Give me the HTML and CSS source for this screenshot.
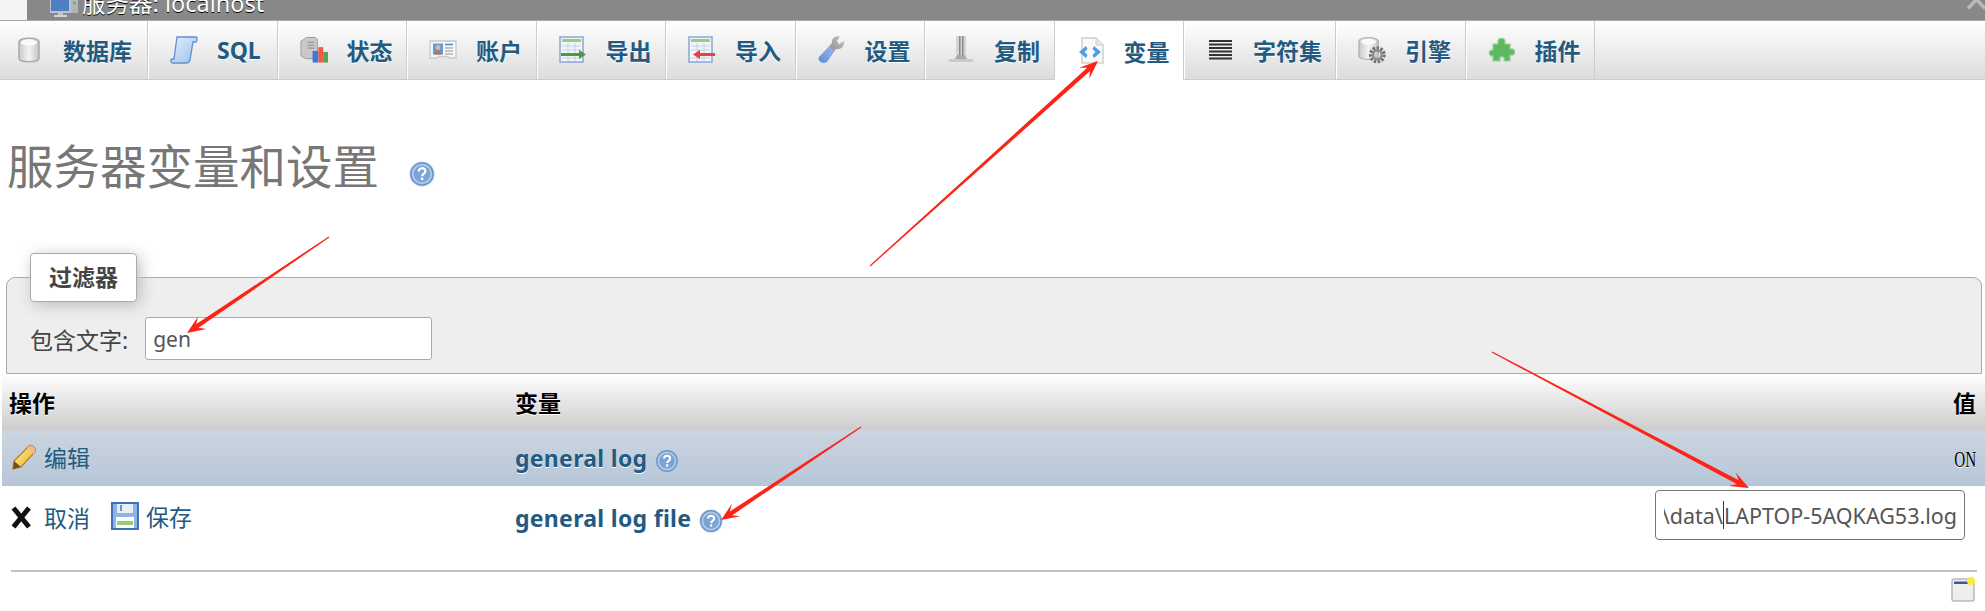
FILE: index.html
```html
<!DOCTYPE html>
<html lang="zh-CN">
<head>
    <meta charset="UTF-8">
    <title>服务器变量和设置</title>
    <link rel="stylesheet" href="styles.css">
</head>
<body>
    <svg class="defs" width="0" height="0">
        <defs>
            <linearGradient id="g-silver" x1="0" y1="0" x2="1" y2="0">
                <stop offset="0" stop-color="#c9c9c9"/><stop offset=".5" stop-color="#f4f4f4"/><stop offset="1" stop-color="#c4c4c4"/>
            </linearGradient>
            <linearGradient id="g-scroll" x1="0" y1="0" x2="1" y2="1">
                <stop offset="0" stop-color="#e4effb"/><stop offset="1" stop-color="#9cc0ea"/>
            </linearGradient>
            <linearGradient id="g-wrench" x1="1" y1="0" x2="0" y2="1">
                <stop offset="0" stop-color="#c9c9c9"/><stop offset=".45" stop-color="#9a9a9a"/><stop offset=".5" stop-color="#8fb0e4"/><stop offset="1" stop-color="#5f8bd6"/>
            </linearGradient>
            <linearGradient id="g-pencil" x1="0" y1="0" x2="1" y2="1">
                <stop offset="0" stop-color="#fff19a"/><stop offset="1" stop-color="#e8b020"/>
            </linearGradient>
            <symbol id="help" viewBox="0 0 26 26">
                <circle cx="13" cy="13" r="12.5" fill="#b4cbe6"/>
                <circle cx="13" cy="13" r="11" fill="none" stroke="#6d97cb" stroke-width="1.600"/>
                <circle cx="13" cy="13" r="8.4" fill="#7ba3d6"/>
                <path d="M9.8 10.4c0-4.200 6.600-4.200 6.600-.2 0 2.600-3.300 2.600-3.300 5" fill="none" stroke="#fff" stroke-width="2.200"/>
                <rect x="11.900" y="16.600" width="2.400" height="2.400" fill="#fff"/>
            </symbol>
        </defs>
    </svg>

    <header class="topbar">
        <span class="topbar-tab"></span>
        <svg class="topbar-icon" width="28" height="18" viewBox="0 0 28 18">
            <rect x="0" y="-4" width="20" height="16" fill="#4f7fc0" stroke="#b8c4d4" stroke-width="2"/>
            <rect x="8" y="12" width="5" height="3" fill="#c4c4c4"/>
            <rect x="4" y="15" width="13" height="2" fill="#d4d4d4"/>
            <rect x="21" y="-2" width="7" height="15" fill="#b4b4b4"/>
            <circle cx="24.500" cy="3" r="1.500" fill="#4fc04f"/>
        </svg>
        <span class="crumb">服务器: localhost</span>
        <svg class="collapse" width="19" height="12" viewBox="0 0 19 12">
            <path d="M1 10.500 9.500 1.500 18 10.500" fill="none" stroke="#b9b9b9" stroke-width="3.500"/>
        </svg>
    </header>

    <nav class="tabs">
        <a class="tab tab-first">
            <svg class="tab-icon" width="28" height="28" viewBox="0 0 28 28">
                <path d="M3 6c0-5 20-5 20 0v16c0 5-20 5-20 0z" fill="url(#g-silver)" stroke="#a9a9a9" stroke-width="1.500"/>
                <ellipse cx="13" cy="6.500" rx="8" ry="3" fill="#fafafa"/>
            </svg>
            <span>数据库</span>
        </a>
        <a class="tab">
            <svg class="tab-icon" width="28" height="28" viewBox="0 0 28 28">
                <path d="M7 1h19c1.500 0 1.500 5-.5 5h-2.500l-3 18c-.5 2-2 3-4 3H3c-2.500 0-3-3.500-.5-4H4z" fill="url(#g-scroll)" stroke="#5f90cf" stroke-width="1.300"/>
            </svg>
            <span>SQL</span>
        </a>
        <a class="tab">
            <svg class="tab-icon" width="29" height="28" viewBox="0 0 29 28">
                <path d="M1 5l6-4h9l2 2v20H6l-5-3z" fill="#c9c9c9" stroke="#9c9c9c"/>
                <path d="M8 6h7M8 9h7M8 12h7" stroke="#8a8a8a"/>
                <rect x="13" y="15" width="6" height="12" fill="#3d78d8"/>
                <rect x="19" y="11" width="5" height="16" fill="#ef5a4c"/>
                <rect x="24" y="16" width="5" height="11" fill="#52a84e"/>
            </svg>
            <span>状态</span>
        </a>
        <a class="tab">
            <svg class="tab-icon" width="28" height="28" viewBox="0 0 28 28">
                <path d="M1 5h26v17h-7l-1-1.500H9L8 22H1z" fill="#f6f6f6" stroke="#c9c9c9" stroke-width="1.300"/>
                <rect x="4" y="7.500" width="10" height="11" fill="#5b9be0"/>
                <circle cx="9" cy="11.500" r="2.500" fill="#eeb27e"/>
                <path d="M5.500 18.500c0-5 7-5 7 0z" fill="#c9703a"/>
                <path d="M16 8.500h8" stroke="#5b86c4" stroke-width="1.500"/>
                <path d="M16 12h8M16 15h8M16 18h8" stroke="#b5b5b5" stroke-width="1.300"/>
            </svg>
            <span>账户</span>
        </a>
        <a class="tab">
            <svg class="tab-icon" width="28" height="28" viewBox="0 0 28 28">
                <rect x="1" y="1" width="23" height="25" fill="#f2f6fb" stroke="#86a8d6" stroke-width="1.500"/>
                <rect x="3" y="3" width="19" height="3" fill="#9ccc7c"/>
                <path d="M3 10h19M3 14h19M3 22h19M9 7v18M16 7v18" stroke="#c2d0e2"/>
                <path d="M2 17h18v-3l7 4.500-7 4.500v-3H2z" fill="#4d9a3e"/>
            </svg>
            <span>导出</span>
        </a>
        <a class="tab">
            <svg class="tab-icon" width="28" height="28" viewBox="0 0 28 28">
                <rect x="1" y="1" width="23" height="25" fill="#f2f6fb" stroke="#86a8d6" stroke-width="1.500"/>
                <rect x="3" y="3" width="19" height="3" fill="#9ccc7c"/>
                <path d="M3 10h19M3 14h19M3 22h19M9 7v18M16 7v18" stroke="#c2d0e2"/>
                <path d="M27 17H12v-3l-7 4.500 7 4.500v-3h15z" fill="#ee3f3f"/>
            </svg>
            <span>导入</span>
        </a>
        <a class="tab">
            <svg class="tab-icon" width="28" height="28" viewBox="0 0 28 28">
                <path d="M1 21 14 7c-1-4 3-8 8-6.500l-3 4.500 2 3 5-3c1 6-4 9-8 8L9 26c-4 3-10-1-8-5z" fill="url(#g-wrench)"/>
            </svg>
            <span>设置</span>
        </a>
        <a class="tab">
            <svg class="tab-icon" width="28" height="28" viewBox="0 0 28 28">
                <path d="M9 0h10v19H9z" fill="#d4d4d4"/>
                <path d="M12 0h1.500v19H12zM15 0h1.500v19H15z" fill="#8a8a8a"/>
                <path d="M10 19h8l2 4H8z" fill="#a8a8a8"/>
                <rect x="2" y="23" width="24" height="3" fill="#c9c9c9"/>
            </svg>
            <span>复制</span>
        </a>
        <a class="tab tab-active">
            <svg class="tab-icon" width="28" height="28" viewBox="0 0 28 28">
                <path d="M5 1h14l7 7v18H5z" fill="#fafafa" stroke="#d0d0d0" stroke-width="1.500"/>
                <path d="M19 1v7h7" fill="#e8e8e8" stroke="#d0d0d0"/>
                <path d="M9 9 2 15l7 6 1.500-3-3-3 3-3zM17 9l7 6-7 6-1.500-3 3-3-3-3z" fill="#4d9ee8"/>
            </svg>
            <span>变量</span>
        </a>
        <a class="tab tab-wide">
            <svg class="tab-icon" width="28" height="28" viewBox="0 0 28 28">
                <path d="M3 5h23M3 8.500h23M3 12h23M3 15.500h23M3 19h23M3 22.500h23" stroke="#333" stroke-width="1.800"/>
            </svg>
            <span>字符集</span>
        </a>
        <a class="tab">
            <svg class="tab-icon" width="29" height="28" viewBox="0 0 29 28">
                <path d="M1 5c0-5 20-5 20 0v15c0 5-20 5-20 0z" fill="url(#g-silver)" stroke="#b0b0b0" stroke-width="1.300"/>
                <ellipse cx="11" cy="5.500" rx="8" ry="3" fill="#fafafa"/>
                <circle cx="20" cy="19" r="7" fill="none" stroke="#6f6f6f" stroke-width="3.500" stroke-dasharray="2.500 1.500"/>
                <circle cx="20" cy="19" r="4.500" fill="none" stroke="#8e8e8e" stroke-width="2.500"/>
            </svg>
            <span>引擎</span>
        </a>
        <a class="tab">
            <svg class="tab-icon" width="28" height="28" viewBox="0 0 28 28">
                <path d="M10 8V6c-1-5 8-5 7 0v2h5v5h1c5-1 5 7 0 6h-1v6h-6v-2c1-3-5-3-4 0v2H5v-5c-5 1-5-7 0-6V8z" fill="#5fb85f" stroke="#97d495" stroke-width="1.200"/>
            </svg>
            <span>插件</span>
        </a>
    </nav>

    <h1 class="page-title">服务器变量和设置
        <svg class="help-lg" width="26" height="26"><use href="#help"/></svg>
    </h1>

    <fieldset class="filter">
        <legend>过滤器</legend>
        <label class="filter-row">包含文字:
            <input class="text-input" type="text" value="gen">
        </label>
    </fieldset>

    <table class="vars">
        <colgroup>
            <col class="col-action">
            <col class="col-name">
            <col>
        </colgroup>
        <thead>
            <tr>
                <th>操作</th>
                <th>变量</th>
                <th class="right">值</th>
            </tr>
        </thead>
        <tbody>
            <tr class="row-hover">
                <td>
                    <a class="action">
                        <svg width="26" height="26" viewBox="0 0 26 26">
                            <path d="M18 2c2-2 8 2 6 6L10 23l-8 2 1-8z" fill="url(#g-pencil)" stroke="#b97a20" stroke-width="1.200"/>
                            <path d="M18 2c2-2 8 2 6 6l-2 2-6-6z" fill="#f0b890"/>
                            <path d="M3 17l7 6-8 2z" fill="#7a4a1a"/>
                        </svg>
                        <span>编辑</span>
                    </a>
                </td>
                <td>
                    <span class="var-name">general log</span>
                    <svg class="help" width="24" height="24"><use href="#help"/></svg>
                </td>
                <td class="right"><span class="value-on">ON</span></td>
            </tr>
            <tr class="row-edit">
                <td>
                    <a class="action">
                        <svg width="26" height="26" viewBox="0 0 26 26">
                            <path d="M2.500 4 18 23M18 4 2.500 23" fill="none" stroke="#111" stroke-width="5"/>
                        </svg>
                        <span>取消</span>
                    </a>
                    <a class="action action-save">
                        <svg width="28" height="28" viewBox="0 0 28 28">
                            <rect x="1" y="1" width="26" height="26" fill="#8db2e4" stroke="#3f70b8" stroke-width="2"/>
                            <rect x="6" y="2" width="16" height="9" fill="#e6eef8"/>
                            <rect x="9" y="3" width="2" height="6" fill="#6f93c8"/>
                            <rect x="5" y="15" width="18" height="11" fill="#fff"/>
                            <rect x="6" y="19" width="16" height="4" fill="#9cc77c"/>
                        </svg>
                        <span>保存</span>
                    </a>
                </td>
                <td>
                    <span class="var-name">general log file</span>
                    <svg class="help" width="24" height="24"><use href="#help"/></svg>
                </td>
                <td class="right cell-input">
                    <div class="value-edit">
                        <div class="value-clip">\data\<span class="caret"></span>LAPTOP-5AQKAG53.log</div>
                    </div>
                </td>
            </tr>
        </tbody>
    </table>

    <hr class="rule">
    <div class="footer-row">
        <svg width="25" height="26" viewBox="0 0 25 26">
            <rect x="1" y="3" width="22" height="22" rx="2" fill="#eeeeee" stroke="#b9b9b9" stroke-width="1.500"/>
            <rect x="3" y="5.500" width="15" height="2.500" fill="#2f5f9f"/>
            <circle cx="20" cy="5" r="4" fill="#f3ee3c"/>
        </svg>
    </div>

    <!-- red arrows drawn over the screenshot -->
    <svg class="arrows" width="1985" height="611" viewBox="0 0 1985 611">
        <polygon transform="translate(870 266) rotate(-41.96)" points="0,-.6 294,-2.200 288,-7.500 306.600,0 288,7.500 294,2.200 0,.6"/>
        <polygon transform="translate(329 237) rotate(145.94)" points="0,-.6 159,-2.200 153,-7.500 171.400,0 153,7.500 159,2.200 0,.6"/>
        <polygon transform="translate(861 427) rotate(146.4)" points="0,-.6 156,-2.200 150,-7.500 168,0 150,7.500 156,2.200 0,.6"/>
        <polygon transform="translate(1492 352) rotate(27.9)" points="0,-.6 278,-2.200 272,-7.500 290.800,0 272,7.500 278,2.200 0,.6"/>
    </svg>
</body>
</html>
```

FILE: styles.css
```css
body {
    margin: 0;
    width: 1985px;
    height: 611px;
    overflow: hidden;
    position: relative;
    background: #fff;
    color: #444;
    font-family: "Noto Sans", "Noto Sans CJK SC", sans-serif;
    font-size: 23px;
}

.defs {
    position: absolute;
}

.topbar {
    height: 20px;
    background: #888;
    border-bottom: 1px solid #aaa;
    display: flex;
    align-items: flex-start;
    overflow: hidden;
}

.topbar-tab {
    width: 27px;
    height: 20px;
    margin-right: 23px;
    background: #f4f4f4;
    flex: none;
}

.topbar-icon {
    flex: none;
    margin-right: 4px;
}

.crumb {
    margin-top: -12px;
    line-height: 30px;
    font-size: 23.500px;
    color: #fff;
    text-shadow: 0 1px 0 #000;
}

.collapse {
    margin-left: auto;
    margin-right: -1px;
    margin-top: -2px;
}

.tabs {
    display: flex;
    height: 58px;
    background: linear-gradient(#fff, #dcdcdc);
    border-bottom: 1px solid #ccc;
}

.tab {
    display: flex;
    flex: none;
    align-items: center;
    height: 58px;
    padding: 0 10px 0 21px;
    border-left: 1px solid #fff;
    border-right: 1px solid #ccc;
    font-weight: 700;
    color: #235a81;
    text-shadow: 0 1px 0 #fff;
    white-space: nowrap;
    box-sizing: border-box;
    width: 129.5px;
}

.tab-first {
    width: 148px;
    padding-left: 16px;
    border-left: none;
}

.tab-wide {
    width: 152px;
}

.tab-icon {
    flex: none;
    width: 28px;
    margin-right: 19px;
}

.tab-active {
    background: #fff;
    height: 59px;
}

.page-title {
    display: flex;
    align-items: center;
    margin: 52px 0 57px;
    padding-left: 7px;
    height: 64px;
    font-size: 46.500px;
    font-weight: 400;
    line-height: 64px;
    color: #777;
    font-family: "Noto Sans CJK SC", sans-serif;
}

.help-lg {
    margin-left: 30px;
    margin-top: 20px;
}

.filter {
    margin: 0 3px 0 6px;
    padding: 15px 23px 13px;
    border: 1px solid #aaa;
    border-radius: 9px 9px 0 0;
    background: #eee;
    box-sizing: border-box;
}

.filter legend {
    height: 49px;
    margin: 0;
    padding: 0 18px;
    box-sizing: border-box;
    line-height: 47px;
    font-weight: 700;
    background: #fff;
    border: 1px solid #aaa;
    border-radius: 4px;
    box-shadow: 3px 3px 15px #bbb;
}

.filter-row {
    display: flex;
    align-items: center;
    gap: 17px;
}

.text-input {
    width: 287px;
    height: 43px;
    padding: 0 7px;
    box-sizing: border-box;
    border: 1px solid #aaa;
    border-radius: 3px;
    background: #fff;
    color: #555;
    font: inherit;
    font-size: 21px;
}

.vars {
    margin-left: 2px;
    width: 1983px;
    border-collapse: collapse;
    table-layout: fixed;
}

.col-action {
    width: 506px;
}

.col-name {
    width: 1100px;
}

.vars th {
    height: 56px;
    padding: 0 9px 0 7px;
    text-align: left;
    color: #000;
    background: linear-gradient(#fff, #ccc);
    text-shadow: 0 1px 0 #fff;
}

.vars td {
    padding: 0 9px 0 7px;
    white-space: nowrap;
}

.vars .right {
    text-align: right;
}

.row-hover td {
    height: 56px;
    background: linear-gradient(#ccd5e0, #b6c6d8);
}

.row-edit td {
    height: 64px;
}

.vars .cell-input {
    height: 60px;
    vertical-align: top;
    padding-top: 4px;
}

.action {
    display: inline-flex;
    align-items: center;
    gap: 7px;
    margin-left: 2px;
    color: #235a81;
}

.action-save {
    margin-left: 15px;
}

.var-name {
    font-weight: 700;
    color: #235a81;
    letter-spacing: .3px;
    text-shadow: 0 1px 0 #fff;
}

.help {
    vertical-align: -6px;
    margin-left: 2px;
}

/* the ON in the screenshot is tall and narrow */
.value-on {
    display: inline-block;
    font-family: "Liberation Serif", serif;
    font-size: 23px;
    color: #000;
    text-shadow: 0 1px 0 #fff;
    transform: scaleX(.66);
    transform-origin: right center;
}

.value-edit {
    display: flex;
    justify-content: flex-end;
    width: 310px;
    height: 50px;
    margin: 0 11px 0 auto;
    padding: 0 7px 0 8px;
    box-sizing: border-box;
    align-items: center;
    border: 1px solid #777;
    border-radius: 4px;
    background: #fff;
    color: #555;
    font-size: 21.500px;
    overflow: hidden;
}

.value-clip {
    display: flex;
    justify-content: flex-end;
    align-items: center;
    width: 100%;
    overflow: hidden;
    white-space: pre;
}

.caret {
    flex: none;
    width: 1px;
    height: 28px;
    background: #334;
}

.rule {
    height: 2px;
    margin: 20px 8px 0 11px;
    border: none;
    background: #c0c0c0;
}

.footer-row {
    display: flex;
    justify-content: flex-end;
    padding: 4px 9px 0 0;
}

.arrows {
    position: absolute;
    left: 0;
    top: 0;
    fill: #fb2417;
    pointer-events: none;
}
```
